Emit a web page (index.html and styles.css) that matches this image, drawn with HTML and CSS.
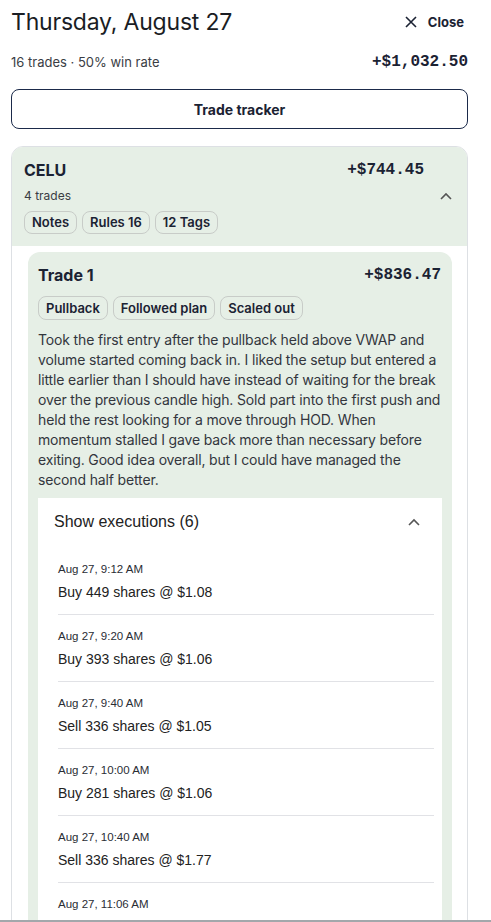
FILE: index.html
```html
<!DOCTYPE html>
<html lang="en">
<head>
  <title>Thursday, August 27</title>
  <link rel="stylesheet" href="styles.css">
</head>
<body>
  <div class="panel">
    <div class="day-head">
      <h1>Thursday, August 27</h1>
      <button class="close">
        <svg width="12" height="12" viewBox="0 0 12 12"><path d="M1 1 L11 11 M11 1 L1 11" stroke="#1b2233" stroke-width="1.6" fill="none"/></svg>
        Close
      </button>
    </div>
    <div class="day-stats">
      <span>16 trades · 50% win rate</span>
      <span class="money big">+$1,032.50</span>
    </div>
    <button class="tracker">Trade tracker</button>

    <div class="symbol-card">
      <div class="symbol-head">
        <div class="name">CELU</div>
        <div class="money">+$744.45</div>
        <div></div>
        <div class="count">4 trades</div>
        <div></div>
        <div class="chev">
          <svg width="12" height="8" viewBox="0 0 12 8"><path d="M1 7 L6 2 L11 7" stroke="#555" stroke-width="1.6" fill="none"/></svg>
        </div>
        <div class="chips">
          <span class="chip">Notes</span>
          <span class="chip">Rules 16</span>
          <span class="chip">12 Tags</span>
        </div>
      </div>

      <div class="symbol-body">
        <div class="trade-card">
          <div class="trade-top">
            <span class="name">Trade 1</span>
            <span class="money">+$836.47</span>
          </div>
          <div class="chips">
            <span class="chip">Pullback</span>
            <span class="chip">Followed plan</span>
            <span class="chip">Scaled out</span>
          </div>
          <p class="note">Took the first entry after the pullback held above VWAP and volume started coming back in. I liked the setup but entered a little earlier than I should have instead of waiting for the break over the previous candle high. Sold part into the first push and held the rest looking for a move through HOD. When momentum stalled I gave back more than necessary before exiting. Good idea overall, but I could have managed the second half better.</p>

          <div class="execs">
            <div class="execs-head">
              <span>Show executions (6)</span>
              <svg width="12" height="8" viewBox="0 0 12 8"><path d="M1 7 L6 2 L11 7" stroke="#555" stroke-width="1.6" fill="none"/></svg>
            </div>
            <div class="exec-list">
              <div class="exec">
                <div class="when">Aug 27, 9:12 AM</div>
                <div class="what">Buy 449 shares @ $1.08</div>
              </div>
              <div class="exec">
                <div class="when">Aug 27, 9:20 AM</div>
                <div class="what">Buy 393 shares @ $1.06</div>
              </div>
              <div class="exec">
                <div class="when">Aug 27, 9:40 AM</div>
                <div class="what">Sell 336 shares @ $1.05</div>
              </div>
              <div class="exec">
                <div class="when">Aug 27, 10:00 AM</div>
                <div class="what">Buy 281 shares @ $1.06</div>
              </div>
              <div class="exec">
                <div class="when">Aug 27, 10:40 AM</div>
                <div class="what">Sell 336 shares @ $1.77</div>
              </div>
              <div class="exec">
                <div class="when">Aug 27, 11:06 AM</div>
                <div class="what">Sell 281 shares @ $1.77</div>
              </div>
            </div>
          </div>
        </div>
      </div>
    </div>
  </div>
</body>
</html>
```

FILE: styles.css
```css
html, body {
  margin: 0;
  height: 100%;
}
body {
  font-family: Inter, "Noto Sans", sans-serif;
  color: #1b2233;
  background: #fff;
  overflow: hidden;
}
.panel {
  height: 920px;
  overflow: hidden;
  border-bottom: 2px solid #a3a7ab;
  padding: 0 23px 0 11px;
}
.day-head {
  display: flex;
  align-items: center;
  justify-content: space-between;
  height: 43px;
}
h1 {
  margin: 0;
  font-size: 23px;
  font-weight: 400;
  color: #1a1d24;
  letter-spacing: -0.2px;
}
.close {
  display: flex;
  align-items: center;
  gap: 11px;
  border: 0;
  background: none;
  padding: 0 4px 0 0;
  font-family: inherit;
  font-size: 13px;
  font-weight: 700;
  color: #1b2233;
}
.day-stats {
  display: flex;
  justify-content: space-between;
  align-items: center;
  margin-top: 10px;
  font-size: 13px;
  color: #3a3d44;
}
.money {
  font-family: "Liberation Mono", monospace;
  font-weight: 700;
  font-size: 16px;
  color: #1b2233;
}
.tracker {
  display: block;
  width: 100%;
  height: 40px;
  margin-top: 18px;
  border: 1px solid #1b2a4a;
  border-radius: 8px;
  background: #fff;
  font-family: inherit;
  font-size: 14px;
  font-weight: 700;
  color: #1b2233;
}
.symbol-card {
  margin-top: 17px;
  border: 1px solid #dde0e4;
  border-radius: 12px;
  overflow: hidden;
}
.symbol-head {
  background: #e6efe6;
  display: grid;
  grid-template-columns: 1fr auto 43px;
  padding: 13px 0 12px 12px;
}
.symbol-head .name {
  font-size: 16px;
  font-weight: 700;
  line-height: 20px;
}
.symbol-head .money {
  line-height: 20px;
}
.count {
  margin-top: 8px;
  font-size: 12px;
  line-height: 16px;
  color: #3a3d44;
}
.chev {
  margin-top: 8px;
  display: flex;
  align-items: center;
  justify-content: center;
}
.symbol-head .chips {
  grid-column: 1 / 4;
  margin-top: 7px;
}
.chips {
  display: flex;
  gap: 5px;
}
.chip {
  height: 21px;
  line-height: 21px;
  padding: 0 7px;
  border: 1px solid #c8ccc8;
  border-radius: 8px;
  font-size: 13px;
  font-weight: 600;
}
.symbol-body {
  padding: 6px 15px 0 16px;
}
.trade-card {
  background: #e6efe6;
  border-radius: 12px 12px 0 0;
  padding: 13px 10px 0 10px;
}
.trade-top {
  display: flex;
  justify-content: space-between;
  line-height: 20px;
  padding-right: 1px;
}
.trade-top .name {
  font-size: 16px;
  font-weight: 700;
}
.trade-card .chips {
  margin-top: 11px;
}
.trade-card .chip {
  height: 22px;
  line-height: 22px;
}
.note {
  margin: 10px 0 8px;
  font-size: 14px;
  line-height: 20px;
  letter-spacing: -0.15px;
  color: #33363d;
}
.execs {
  background: #fff;
  font-family: "Liberation Sans", Arial, sans-serif;
}
.execs-head {
  display: flex;
  align-items: center;
  justify-content: space-between;
  height: 48px;
  padding: 0 22px 0 16px;
  font-size: 16px;
  color: #222;
}
.exec-list {
  padding: 2px 8px 0 20px;
}
.exec {
  padding: 13px 0 12px;
  border-top: 1px solid #e1e2e6;
}
.exec:first-child {
  border-top: 0;
}
.when {
  font-size: 11.5px;
  line-height: 16px;
  color: #2a2d34;
}
.what {
  margin-top: 5px;
  font-size: 14px;
  line-height: 20px;
  color: #222;
}
```
